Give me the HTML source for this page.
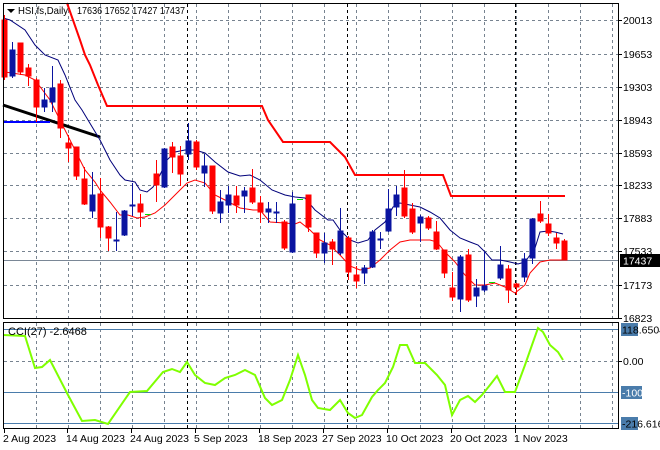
<!DOCTYPE html>
<html><head><meta charset="utf-8"><style>
html,body{margin:0;padding:0;background:#fff;}
svg{display:block;font-family:"Liberation Sans",Arial,sans-serif;}
</style></head><body>
<svg width="660" height="450" viewBox="0 0 660 450" xmlns="http://www.w3.org/2000/svg">
<rect width="660" height="450" fill="#fff"/>
<g stroke="#778390" stroke-width="1" stroke-dasharray="3,3" fill="none">
<path d="M36.5 4V318M68.5 4V318M100.5 4V318M132.5 4V318M164.5 4V318M196.5 4V318M228.5 4V318M260.5 4V318M292.5 4V318M324.5 4V318M356.5 4V318M388.5 4V318M420.5 4V318M452.5 4V318M484.5 4V318M516.5 4V318M548.5 4V318M580.5 4V318M612.5 4V318"/>
<path d="M4 20.5H619M4 54.5H619M4 87.5H619M4 120.5H619M4 153.5H619M4 185.5H619M4 218.5H619M4 251.5H619M4 285.5H619"/>
<path d="M36.5 323V428M100.5 323V428M132.5 323V428M164.5 323V428M196.5 323V428M228.5 323V428M260.5 323V428M292.5 323V428M324.5 323V428M356.5 323V428M388.5 323V428M420.5 323V428M452.5 323V428M484.5 323V428M548.5 323V428M580.5 323V428M612.5 323V428M68.5 323V428"/>
<path d="M4 361.5H619"/>
</g>
<g stroke="#000" stroke-width="1" stroke-dasharray="3,3"><path d="M187.5 4V318M347.5 4V318M515.5 4V318M187.5 323V428M347.5 323V428M515.5 323V428"/></g>
<line x1="4" y1="260.5" x2="619" y2="260.5" stroke="#7a8796" stroke-width="1"/>
<g stroke="#4a7cab" stroke-width="1"><path d="M4 329.5H619M4 392.5H619M4 423.5H619"/></g>
<polyline fill="none" stroke="#ff0000" stroke-width="2" points="67,3 80,40 85,55 90,65 98,85 107,106 262,106 268,120 283,142 330,142 345,157 355,175 443,175 451,196 565,196"/>
<polyline fill="none" stroke="#000" stroke-width="3" points="3,105 100,137"/>
<polyline fill="none" stroke="#0000ff" stroke-width="2" points="3,122 50,122"/>
<polyline fill="none" stroke="#00007a" stroke-width="1" points="3,18 10,20 25,30 35,45 45,55 58,60 65,75 75,100 82,110 100,140 110,160 120,175 125,180 135,182 140,190 147,192 153,187 160,175 167,160 175,152 185,150 195,150 205,153 215,162 228,172 240,176 250,175 260,180 272,190 285,195 295,197 305,198 315,210 328,220 333,220 340,230 350,240 358,243 368,240 375,230 385,222 393,207 400,203 410,205 420,207 430,212 440,218 450,230 460,238 470,242 478,245 485,252 492,260 500,260 510,262 518,264 525,262 530,255 535,248 540,232 548,231 555,232 563,234"/>
<polyline fill="none" stroke="#ff0000" stroke-width="1" points="5,72 25,75 35,80 50,100 60,120 70,140 75,150 85,170 95,182 100,190 110,202 120,215 128,215 137,218 145,217 155,213 165,205 172,198 180,190 187,183 195,180 205,183 215,195 225,200 240,208 253,210 260,210 270,222 285,223 295,224 300,222 310,230 320,240 330,245 340,255 350,266 360,270 370,268 380,260 390,250 400,242 410,240 420,240 430,240 437,242 445,252 455,262 465,275 475,285 485,285 495,283 505,287 515,293 525,285 530,273 540,262 550,260 563,260"/>
<g stroke-width="1">
<g stroke="#ff0000" fill="#ff0000">
<line x1="4.5" y1="15" x2="4.5" y2="80"/><rect x="2" y="20" width="5" height="57"/>
<line x1="20.5" y1="43" x2="20.5" y2="75"/><rect x="18" y="43" width="5" height="29"/>
<line x1="28.5" y1="64" x2="28.5" y2="86"/><rect x="26" y="68" width="5" height="8"/>
<line x1="36.5" y1="78" x2="36.5" y2="122"/><rect x="34" y="80" width="5" height="27"/>
<line x1="60.5" y1="80" x2="60.5" y2="138"/><rect x="58" y="84" width="5" height="44"/>
<line x1="68.5" y1="135" x2="68.5" y2="162"/><rect x="66" y="143" width="5" height="5"/>
<line x1="76.5" y1="147" x2="76.5" y2="180"/><rect x="74" y="147" width="5" height="29"/>
<line x1="84.5" y1="167" x2="84.5" y2="205"/><rect x="82" y="179" width="5" height="25"/>
<line x1="100.5" y1="178" x2="100.5" y2="238"/><rect x="98" y="194" width="5" height="33"/>
<line x1="108.5" y1="226" x2="108.5" y2="251"/><rect x="106" y="227" width="5" height="11"/>
<line x1="140.5" y1="194" x2="140.5" y2="227"/><rect x="138" y="204" width="5" height="8"/>
<line x1="156.5" y1="160" x2="156.5" y2="202"/><rect x="154" y="174" width="5" height="11"/>
<line x1="172.5" y1="142" x2="172.5" y2="173"/><rect x="170" y="147" width="5" height="10"/>
<line x1="180.5" y1="146" x2="180.5" y2="186"/><rect x="178" y="156" width="5" height="18"/>
<line x1="196.5" y1="140" x2="196.5" y2="170"/><rect x="194" y="142" width="5" height="25"/>
<line x1="212.5" y1="166" x2="212.5" y2="214"/><rect x="210" y="166" width="5" height="45"/>
<line x1="236.5" y1="186" x2="236.5" y2="213"/><rect x="234" y="196" width="5" height="9"/>
<line x1="252.5" y1="169" x2="252.5" y2="204"/><rect x="250" y="188" width="5" height="14"/>
<line x1="260.5" y1="196" x2="260.5" y2="223"/><rect x="258" y="203" width="5" height="9"/>
<line x1="284.5" y1="220" x2="284.5" y2="250"/><rect x="282" y="222" width="5" height="26"/>
<line x1="308.5" y1="195" x2="308.5" y2="232"/><rect x="306" y="195" width="5" height="32"/>
<line x1="316.5" y1="233" x2="316.5" y2="258"/><rect x="314" y="233" width="5" height="20"/>
<line x1="332.5" y1="239" x2="332.5" y2="265"/><rect x="330" y="242" width="5" height="7"/>
<line x1="348.5" y1="236" x2="348.5" y2="280"/><rect x="346" y="238" width="5" height="34"/>
<line x1="356.5" y1="266" x2="356.5" y2="288"/><rect x="354" y="275" width="5" height="6"/>
<line x1="404.5" y1="170" x2="404.5" y2="218"/><rect x="402" y="188" width="5" height="28"/>
<line x1="412.5" y1="203" x2="412.5" y2="234"/><rect x="410" y="209" width="5" height="23"/>
<line x1="428.5" y1="216" x2="428.5" y2="230"/><rect x="426" y="218" width="5" height="10"/>
<line x1="436.5" y1="221" x2="436.5" y2="250"/><rect x="434" y="232" width="5" height="17"/>
<line x1="444.5" y1="250" x2="444.5" y2="278"/><rect x="442" y="250" width="5" height="23"/>
<line x1="452.5" y1="272" x2="452.5" y2="301"/><rect x="450" y="288" width="5" height="9"/>
<line x1="468.5" y1="249" x2="468.5" y2="302"/><rect x="466" y="255" width="5" height="45"/>
<line x1="508.5" y1="265" x2="508.5" y2="303"/><rect x="506" y="269" width="5" height="21"/>
<line x1="516.5" y1="283" x2="516.5" y2="295"/><rect x="514" y="284" width="5" height="3"/>
<line x1="540.5" y1="201" x2="540.5" y2="223"/><rect x="538" y="214" width="5" height="7"/>
<line x1="548.5" y1="214" x2="548.5" y2="236"/><rect x="546" y="224" width="5" height="9"/>
<line x1="556.5" y1="233" x2="556.5" y2="249"/><rect x="554" y="238" width="5" height="5"/>
<line x1="564.5" y1="239" x2="564.5" y2="260"/><rect x="562" y="241" width="5" height="19"/>
</g>
<g stroke="#0a14a0" fill="#0a14a0">
<line x1="12.5" y1="42" x2="12.5" y2="78"/><rect x="10" y="50" width="5" height="26"/>
<line x1="44.5" y1="88" x2="44.5" y2="112"/><rect x="42" y="100" width="5" height="7"/>
<line x1="52.5" y1="66" x2="52.5" y2="112"/><rect x="50" y="88" width="5" height="14"/>
<line x1="92.5" y1="172" x2="92.5" y2="218"/><rect x="90" y="195" width="5" height="16"/>
<line x1="116.5" y1="212" x2="116.5" y2="251"/><rect x="114" y="240" width="5" height="1"/>
<line x1="124.5" y1="210" x2="124.5" y2="236"/><rect x="122" y="211" width="5" height="24"/>
<line x1="132.5" y1="183" x2="132.5" y2="216"/><rect x="130" y="205" width="5" height="1"/>
<line x1="164.5" y1="148" x2="164.5" y2="188"/><rect x="162" y="149" width="5" height="38"/>
<line x1="188.5" y1="123" x2="188.5" y2="160"/><rect x="186" y="141" width="5" height="13"/>
<line x1="204.5" y1="154" x2="204.5" y2="187"/><rect x="202" y="166" width="5" height="7"/>
<line x1="220.5" y1="190" x2="220.5" y2="223"/><rect x="218" y="202" width="5" height="11"/>
<line x1="228.5" y1="186" x2="228.5" y2="213"/><rect x="226" y="195" width="5" height="10"/>
<line x1="244.5" y1="187" x2="244.5" y2="213"/><rect x="242" y="191" width="5" height="5"/>
<line x1="268.5" y1="202" x2="268.5" y2="223"/><rect x="266" y="209" width="5" height="3"/>
<line x1="276.5" y1="202" x2="276.5" y2="223"/><rect x="274" y="212" width="5" height="1"/>
<line x1="292.5" y1="192" x2="292.5" y2="253"/><rect x="290" y="204" width="5" height="48"/>
<line x1="324.5" y1="233" x2="324.5" y2="263"/><rect x="322" y="243" width="5" height="10"/>
<line x1="340.5" y1="208" x2="340.5" y2="255"/><rect x="338" y="231" width="5" height="22"/>
<line x1="364.5" y1="265" x2="364.5" y2="284"/><rect x="362" y="268" width="5" height="5"/>
<line x1="372.5" y1="230" x2="372.5" y2="268"/><rect x="370" y="232" width="5" height="35"/>
<line x1="380.5" y1="232" x2="380.5" y2="249"/><rect x="378" y="239" width="5" height="1"/>
<line x1="388.5" y1="189" x2="388.5" y2="232"/><rect x="386" y="209" width="5" height="22"/>
<line x1="396.5" y1="186" x2="396.5" y2="216"/><rect x="394" y="195" width="5" height="12"/>
<line x1="420.5" y1="215" x2="420.5" y2="242"/><rect x="418" y="217" width="5" height="6"/>
<line x1="460.5" y1="255" x2="460.5" y2="312"/><rect x="458" y="257" width="5" height="42"/>
<line x1="476.5" y1="279" x2="476.5" y2="307"/><rect x="474" y="288" width="5" height="8"/>
<line x1="484.5" y1="251" x2="484.5" y2="292"/><rect x="482" y="286" width="5" height="4"/>
<line x1="500.5" y1="246" x2="500.5" y2="280"/><rect x="498" y="265" width="5" height="13"/>
<line x1="524.5" y1="253" x2="524.5" y2="282"/><rect x="522" y="259" width="5" height="18"/>
<line x1="532.5" y1="218" x2="532.5" y2="264"/><rect x="530" y="219" width="5" height="39"/>
</g>
<g stroke="#00e000" stroke-width="1"><path d="M145 214.5H151M297 199.5H303M489 282.5H495"/></g>
</g>
<polyline fill="none" stroke="#7fff00" stroke-width="2" points="3,335 25,336 35,368 42,367 50,360 68,395 82,421 95,420 108,424 130,392 147,391 163,372 172,369 180,372 187,362 195,375 205,383 215,385 225,378 235,375 245,370 255,375 265,398 272,405 282,400 290,380 298,355 305,375 312,400 318,408 330,410 340,400 348,413 355,418 362,415 372,397 378,390 385,383 393,367 400,345 407,345 415,363 425,363 437,375 445,385 452,415 460,400 468,396 475,402 482,395 490,385 497,376 505,392 515,392 525,365 532,345 538,328 543,332 550,345 558,352 563,360"/>
<rect x="3.5" y="3.5" width="615" height="315" fill="none" stroke="#000"/>
<rect x="3.5" y="322.5" width="615" height="106" fill="none" stroke="#000"/>
<polygon points="7,9 15,9 11,13" fill="#000"/>
<text x="18" y="14" font-size="10.5" fill="#000" textLength="50" lengthAdjust="spacingAndGlyphs">HSI,fs,Daily</text>
<text x="77" y="14" font-size="10.5" fill="#000" textLength="108" lengthAdjust="spacingAndGlyphs">17636 17652 17427 17437</text>
<text x="8" y="335" font-size="11" fill="#000">CCI(27) -2.6468</text>
<g font-size="10.5" fill="#000">
<text x="623" y="24">20013</text><text x="623" y="58">19653</text><text x="623" y="91">19303</text>
<text x="623" y="124">18943</text><text x="623" y="157">18593</text><text x="623" y="189">18233</text>
<text x="623" y="222">17883</text><text x="623" y="255">17533</text><text x="623" y="289">17173</text>
<text x="623" y="322">16823</text>
</g>
<g stroke="#000"><path d="M619 20.5h3M619 54.5h3M619 87.5h3M619 120.5h3M619 153.5h3M619 185.5h3M619 218.5h3M619 251.5h3M619 285.5h3M619 318.5h3M619 361.5h3"/></g>
<rect x="620" y="254" width="40" height="13" fill="#000"/>
<text x="623" y="264.5" font-size="10.5" fill="#fff">17437</text>
<rect x="621" y="323" width="17" height="13" fill="#4a7cab"/>
<text x="622" y="333.5" font-size="10.5" fill="#000">118.6504</text>
<text x="623" y="365" font-size="10.5" fill="#000">0.00</text>
<rect x="621" y="386" width="21" height="13" fill="#4a7cab"/>
<text x="622" y="396.5" font-size="10.5" fill="#fff">-100</text>
<rect x="621" y="417" width="17" height="13" fill="#4a7cab"/>
<text x="622" y="427.5" font-size="10.5" fill="#000">-216.6161</text>
<g stroke="#000"><path d="M4.5 428v5M67.5 428v5M131.5 428v5M195.5 428v5M259.5 428v5M323.5 428v5M387.5 428v5M451.5 428v5M515.5 428v5"/></g>
<g font-size="10.5" fill="#000">
<text x="3" y="442">2 Aug 2023</text><text x="66" y="442">14 Aug 2023</text><text x="130" y="442">24 Aug 2023</text>
<text x="194" y="442">5 Sep 2023</text><text x="258" y="442">18 Sep 2023</text><text x="322" y="442">27 Sep 2023</text>
<text x="386" y="442">10 Oct 2023</text><text x="450" y="442">20 Oct 2023</text><text x="514" y="442">1 Nov 2023</text>
</g>
</svg>
</body></html>
